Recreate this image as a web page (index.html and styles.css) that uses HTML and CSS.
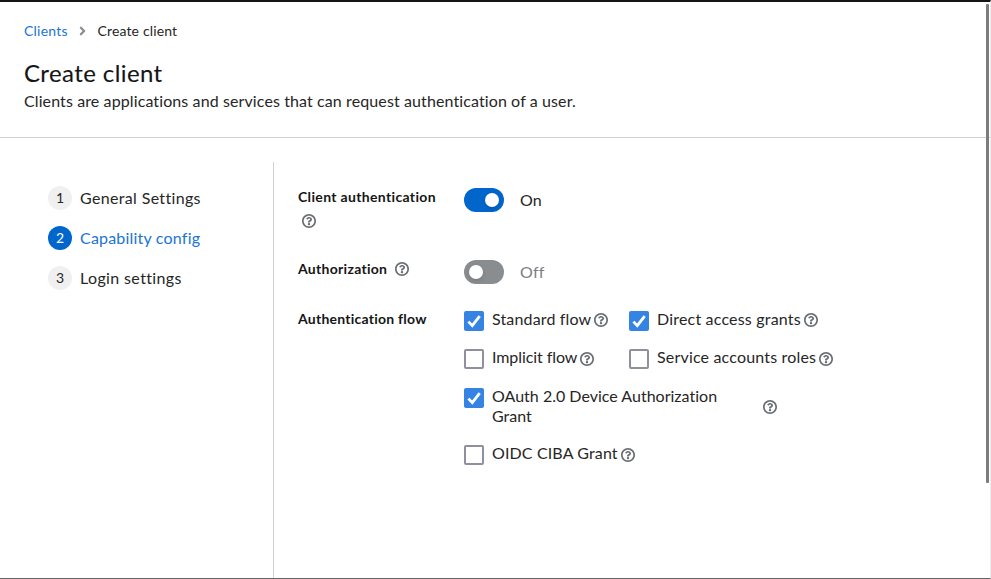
FILE: index.html
```html
<!DOCTYPE html>
<html lang="en">
<head>
<meta charset="utf-8">
<title>Create client</title>
<link rel="stylesheet" href="styles.css">
</head>
<body>
<svg class="defs" width="0" height="0">
  <symbol id="help" viewBox="8 8 496 496"><path d="M256 8C119.043 8 8 119.083 8 256c0 136.997 111.043 248 248 248s248-111.003 248-248C504 119.083 392.957 8 256 8zm0 436c-103.900 0-188-84.067-188-188 0-103.865 84.104-188 188-188 103.862 0 188 84.103 188 188 0 103.898-84.065 188-188 188zm107.244-243.200c0 67.052-72.421 68.084-72.421 92.863V300c0 6.627-5.373 12-12 12h-45.647c-6.627 0-12-5.373-12-12v-8.659c0-35.745 27.100-50.034 47.579-61.516 17.561-9.845 28.324-16.541 28.324-29.579 0-17.246-21.999-28.693-39.784-28.693-23.189 0-33.894 10.977-48.942 29.969-4.057 5.120-11.460 6.071-16.666 2.124l-27.824-21.098c-5.107-3.872-6.251-11.066-2.644-16.363C184.846 131.491 214.940 112 261.794 112c49.071 0 101.450 38.304 101.450 88.800zM298 368c0 23.159-18.841 42-42 42s-42-18.841-42-42 18.841-42 42-42 42 18.841 42 42z"/></symbol>
</svg>
<div class="window">
  <header class="page-header">
    <nav class="breadcrumb">
      <a class="crumb-link">Clients</a>
      <svg class="chevron" viewBox="0 0 256 512"><path d="M224.3 273l-136 136c-9.400 9.400-24.600 9.400-33.900 0l-22.600-22.600c-9.400-9.400-9.400-24.600 0-33.900l96.400-96.400-96.400-96.400c-9.400-9.400-9.400-24.600 0-33.900L54.300 103c9.400-9.400 24.600-9.400 33.900 0l136 136c9.500 9.400 9.500 24.600.1 34z"/></svg>
      <span class="crumb-current">Create client</span>
    </nav>
    <h1 class="title"><span>Create client</span></h1>
    <p class="subtitle"><span>Clients are applications and services that can request authentication of a user.</span></p>
  </header>
  <main class="wizard">
    <ol class="steps">
      <li class="step"><span class="num">1</span><span class="step-general">General Settings</span></li>
      <li class="step current"><span class="num">2</span><span class="step-capability">Capability config</span></li>
      <li class="step"><span class="num">3</span><span class="step-login">Login settings</span></li>
    </ol>
    <form class="form">
      <div class="row row-client">
        <div class="label"><span class="label-client">Client authentication</span><svg class="help wrapped"><use href="#help"/></svg></div>
        <div class="switch on"><span class="track"></span><span class="state">On</span></div>
      </div>
      <div class="row row-authz">
        <div class="label"><span class="label-authz">Authorization</span><svg class="help inline"><use href="#help"/></svg></div>
        <div class="switch"><span class="track"></span><span class="state">Off</span></div>
      </div>
      <div class="row row-flow">
        <div class="label"><span class="label-flow">Authentication flow</span></div>
        <div class="checks">
          <div class="check first"><span class="box checked"><svg viewBox="0 0 20 20"><path d="M4.400 10.600l3.900 4.100 7.400-9.500"/></svg></span><span class="text t-standard">Standard flow</span><svg class="help"><use href="#help"/></svg></div>
          <div class="check first"><span class="box checked"><svg viewBox="0 0 20 20"><path d="M4.400 10.600l3.900 4.100 7.400-9.500"/></svg></span><span class="text t-direct">Direct access grants</span><svg class="help"><use href="#help"/></svg></div>
          <div class="check"><span class="box"></span><span class="text t-implicit">Implicit flow</span><svg class="help"><use href="#help"/></svg></div>
          <div class="check"><span class="box"></span><span class="text t-service">Service accounts roles</span><svg class="help"><use href="#help"/></svg></div>
          <div class="check wide device"><span class="box checked"><svg viewBox="0 0 20 20"><path d="M4.400 10.600l3.900 4.100 7.400-9.500"/></svg></span><span class="text long">OAuth 2.0 Device Authorization<br>Grant</span><svg class="help"><use href="#help"/></svg></div>
          <div class="check wide"><span class="box"></span><span class="text t-ciba">OIDC CIBA Grant</span><svg class="help"><use href="#help"/></svg></div>
        </div>
      </div>
    </form>
  </main>
  <div class="scrollbar"></div>
</div>
</body>
</html>
```

FILE: styles.css
```css
* { box-sizing: border-box; }
body { margin: 0; background: #fff; color: #262626; font: 16px/20px Lato, "Open Sans", sans-serif; white-space: nowrap; font-variant-ligatures: none; }
.defs { position: absolute; }
.window { position: relative; height: 579px; border-right: 1px solid #eee; overflow: hidden; display: flex; flex-direction: column; border-top: 2px solid #151515; border-bottom: 1px solid #636363; }
.page-header { height: 136px; flex: none; border-bottom: 1px solid #d2d2d2; padding: 19px 24px 0; }
.breadcrumb { display: flex; align-items: center; height: 20px; font-size: 14px; }
.crumb-link { color: #1a75d1; width: 44px; letter-spacing: .22px; }
.crumb-current { letter-spacing: .15px; }
.chevron { width: 7px; height: 14px; margin: 0 12px 0 10.5px; fill: #8a8d90; }
.title { font-size: 24px; line-height: 32px; font-weight: 400; margin: 16px 0 0; letter-spacing: .4px; color: #151515; -webkit-text-stroke: .1px; }
.subtitle { line-height: 24px; margin: 0; letter-spacing: .107px; }
.wizard { display: flex; flex: 1; padding-top: 24px; }
.steps { list-style: none; margin: 0; padding: 24px 0 0 48px; width: 274px; flex: none; border-right: 1px solid #d2d2d2; display: flex; flex-direction: column; gap: 16px; }
.step { display: flex; align-items: center; gap: 8px; height: 24px; }
.step-general { letter-spacing: .34px; }
.step-capability { letter-spacing: .2px; }
.step-login { letter-spacing: .37px; }
.num { width: 24px; height: 24px; border-radius: 50%; background: #f0f0f0; font-size: 14px; line-height: 24px; text-align: center; }
.current { color: #1a75d1; }
.current .num { background: #06c; color: #fff; }
.form { padding: 24px 0 0 24px; flex: 1; }
.row { display: grid; grid-template-columns: 166px 400px; }
.row-client { height: 72px; }
.row-authz { height: 50px; }
.label { position: relative; top: -1px; font-size: 14px; font-weight: 700; line-height: 23px; color: #151515; }
.label-client { letter-spacing: .34px; }
.label-authz { letter-spacing: .29px; }
.label-flow { letter-spacing: .24px; }
.help { width: 14px; height: 14px; fill: #6a6e73; flex: none; }
.wrapped { display: block; margin: 6px 0 0 4px; }
.inline { margin-left: 8px; vertical-align: -2px; }
.switch { display: flex; gap: 16px; height: 24px; align-items: center; margin-top: 2px; color: #7a7e83; }
.switch.on { color: #262626; }
.state { letter-spacing: .2px; }
.track { width: 40px; height: 24px; border-radius: 12px; background: #8a8d90; padding: 5px; display: flex; }
.track::after { content: ""; width: 14px; height: 14px; border-radius: 50%; background: #fff; box-shadow: 0 2px 4px #0002; }
.on .track { background: #06c; justify-content: flex-end; }
.checks { display: grid; grid-template-columns: 165px 220px; grid-template-rows: 38px 39px 57px 24px; padding-top: 1px; }
.check { display: flex; align-items: flex-start; }
.wide { grid-column: 1 / 3; }
.box { width: 20px; height: 20px; margin: 2px 8px 0 0; border: 2px solid #8f8f9d; border-radius: 2px; flex: none; }
.checked { border: 0; background: #3584e4; }
.box svg { display: block; width: 20px; height: 20px; fill: none; stroke: #fff; stroke-width: 2.8; }
.check .help { margin: 5px 0 0 3px; }
.check.first .help { margin-top: 4px; }
.check.device .help { margin-top: 14px; }
.text.long { width: 268px; letter-spacing: .01px; }
.t-standard { letter-spacing: .15px; }
.t-direct { letter-spacing: .19px; }
.t-implicit { letter-spacing: -.08px; }
.t-service { letter-spacing: .18px; }
.t-ciba { letter-spacing: .13px; }
.scrollbar { position: absolute; top: 2px; right: 1px; width: 3px; height: 479px; border-radius: 1px; background: #7b7d7d; }
```
